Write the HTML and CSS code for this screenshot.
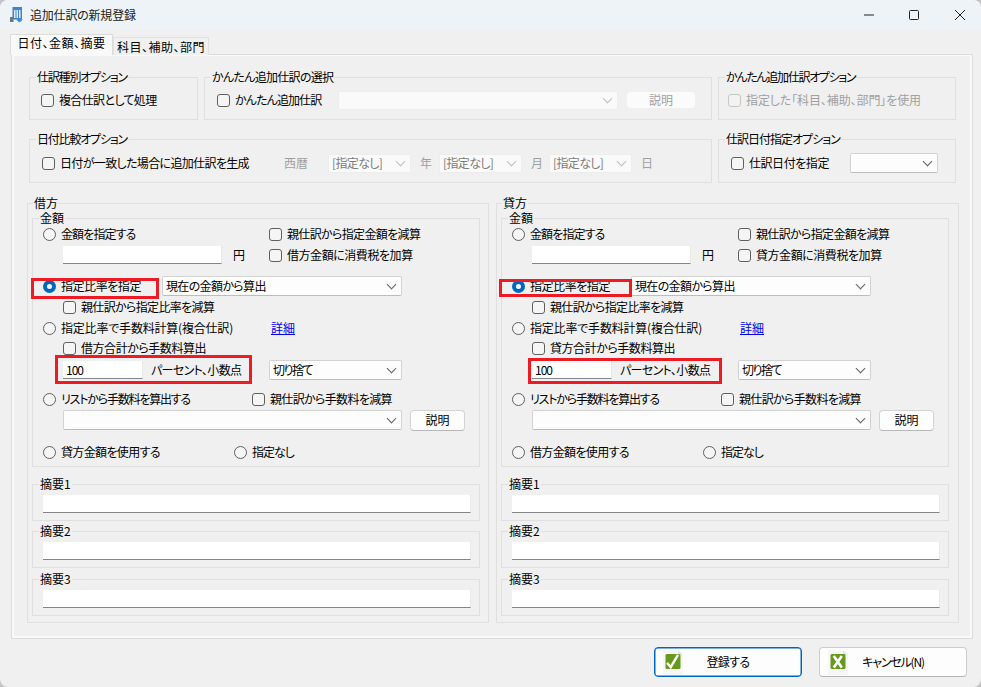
FILE: index.html
```html
<!DOCTYPE html>
<html lang="ja">
<head>
<meta charset="utf-8">
<title>追加仕訳の新規登録</title>
<link rel="stylesheet" href="styles.css">
</head>
<body>
<div class="window">
  <header class="titlebar">
    <svg class="app-icon" width="14" height="16" viewBox="0 0 14 16"><rect x="3.5" y="0" width="9.5" height="12.5" fill="#3f83cf"/><rect x="5" y="3" width="6.5" height="8" fill="#e3edf8"/><path d="M7 3v8M9.5 3v8" stroke="#3f83cf" stroke-width="1"/><rect x="1" y="10" width="3.5" height="5" fill="#6d7682"/><path d="M8.5 11h4v1.500h1.500L10.500 15.500 7 12.500h1.500z" fill="#3a8be0"/></svg>
    <span class="title-text">追加仕訳の新規登録</span>
    <div class="win-controls">
      <svg width="10" height="10" viewBox="0 0 10 10"><path d="M0 5h10" stroke="#222" stroke-width="1"/></svg>
      <svg width="10" height="10" viewBox="0 0 10 10"><rect x="0.5" y="0.500" width="9" height="9" rx="1" fill="none" stroke="#222"/></svg>
      <svg width="10" height="10" viewBox="0 0 10 10"><path d="M0 0l10 10M10 0L0 10" stroke="#222" stroke-width="1"/></svg>
    </div>
  </header>

  <nav class="tabs">
    <div class="tab active">日付、金額、摘要</div>
    <div class="tab">科目、補助、部門</div>
  </nav>

  <main class="panel">
    <div class="group-row first">
      <section class="group g1">
        <div class="legend sp-12">仕訳種別オプション</div>
        <div class="row top-row pad-11">
          <label class="opt"><input type="checkbox">複合仕訳として処理</label>
        </div>
      </section>
      <section class="group g2">
        <div class="legend sp-7">かんたん追加仕訳の選択</div>
        <div class="row top-row pad-12">
          <label class="opt w-121 sp-9"><input type="checkbox">かんたん追加仕訳</label>
          <div class="combo off w-280 h-19"></div>
          <button class="btn off-btn" type="button">説明</button>
        </div>
      </section>
      <section class="group g3">
        <div class="legend sp-13">かんたん追加仕訳オプション</div>
        <div class="row top-row pad-9">
          <label class="opt off-text sp-1"><input type="checkbox" disabled>指定した「科目、補助、部門」を使用</label>
        </div>
      </section>
    </div>

    <div class="group-row second">
      <section class="group g4">
        <div class="legend sp-12">日付比較オプション</div>
        <div class="row second-row pad-12">
          <label class="opt w-242"><input type="checkbox">日付が一致した場合に追加仕訳を生成</label>
          <span class="off-text w-44 sp-0">西暦</span>
          <div class="combo off w-83 h-19"><span>[指定なし]</span></div>
          <span class="off-text unit w-19">年</span>
          <div class="combo off w-83 h-19"><span>[指定なし]</span></div>
          <span class="off-text unit w-18">月</span>
          <div class="combo off w-83 h-19"><span>[指定なし]</span></div>
          <span class="off-text unit">日</span>
        </div>
      </section>
      <section class="group g5">
        <div class="legend sp-10">仕訳日付指定オプション</div>
        <div class="row second-row pad-12">
          <label class="opt w-119 sp-4"><input type="checkbox">仕訳日付を指定</label>
          <div class="combo w-88 h-20"></div>
        </div>
      </section>
    </div>

    <div class="sides">
      <section class="group side side-l">
        <div class="legend side-legend">借方</div>
        <div class="group money">
          <div class="legend">金額</div>
          <div class="row r1"><label class="opt w-226 sp-9"><input type="radio" name="l">金額を指定する</label><label class="opt"><input type="checkbox">親仕訳から指定金額を減算</label></div>
          <div class="row r2 indent"><input class="field w-159" type="text"><span class="yen">円</span><label class="opt sp-4"><input type="checkbox">借方金額に消費税を加算</label></div>
          <div class="row r3"><label class="opt w-119 sp-4"><input type="radio" name="l" checked>指定比率を指定</label><div class="combo w-240 h-20"><span>現在の金額から算出</span></div></div>
          <div class="row r4 indent"><label class="opt"><input type="checkbox">親仕訳から指定比率を減算</label></div>
          <div class="row r5"><label class="opt w-228 sp-2"><input type="radio" name="l">指定比率で手数料計算(複合仕訳)</label><a class="link" href="#">詳細</a></div>
          <div class="row r6 indent"><label class="opt sp-4"><input type="checkbox">借方合計から手数料算出</label></div>
          <div class="row r7 indent"><input class="field w-80 num" type="text" value="100"><span class="pct">パーセント、小数点</span><div class="combo w-133 h-20"><span class="sp-15">切り捨て</span></div></div>
          <div class="row r8"><label class="opt w-209 sp-12"><input type="radio" name="l">リストから手数料を算出する</label><label class="opt"><input type="checkbox">親仕訳から手数料を減算</label></div>
          <div class="row r9 indent"><div class="combo w-339 h-20"></div><button class="btn" type="button">説明</button></div>
          <div class="row r10"><label class="opt w-191"><input type="radio" name="l">貸方金額を使用する</label><label class="opt sp-10"><input type="radio" name="l">指定なし</label></div>
        </div>
        <div class="group memo m1"><div class="legend">摘要1</div><input class="field memo-field" type="text"></div>
        <div class="group memo m2"><div class="legend">摘要2</div><input class="field memo-field" type="text"></div>
        <div class="group memo m3"><div class="legend">摘要3</div><input class="field memo-field" type="text"></div>
        <span class="mark l-a"></span>
        <span class="mark l-b"></span>
      </section>

      <section class="group side side-r">
        <div class="legend side-legend">貸方</div>
        <div class="group money">
          <div class="legend">金額</div>
          <div class="row r1"><label class="opt w-226 sp-9"><input type="radio" name="r">金額を指定する</label><label class="opt"><input type="checkbox">親仕訳から指定金額を減算</label></div>
          <div class="row r2 indent"><input class="field w-159" type="text"><span class="yen">円</span><label class="opt sp-4"><input type="checkbox">貸方金額に消費税を加算</label></div>
          <div class="row r3"><label class="opt w-119 sp-4"><input type="radio" name="r" checked>指定比率を指定</label><div class="combo w-240 h-20"><span>現在の金額から算出</span></div></div>
          <div class="row r4 indent"><label class="opt"><input type="checkbox">親仕訳から指定比率を減算</label></div>
          <div class="row r5"><label class="opt w-228 sp-2"><input type="radio" name="r">指定比率で手数料計算(複合仕訳)</label><a class="link" href="#">詳細</a></div>
          <div class="row r6 indent"><label class="opt sp-4"><input type="checkbox">貸方合計から手数料算出</label></div>
          <div class="row r7 indent"><input class="field w-80 num" type="text" value="100"><span class="pct">パーセント、小数点</span><div class="combo w-133 h-20"><span class="sp-15">切り捨て</span></div></div>
          <div class="row r8"><label class="opt w-209 sp-12"><input type="radio" name="r">リストから手数料を算出する</label><label class="opt"><input type="checkbox">親仕訳から手数料を減算</label></div>
          <div class="row r9 indent"><div class="combo w-339 h-20"></div><button class="btn" type="button">説明</button></div>
          <div class="row r10"><label class="opt w-191"><input type="radio" name="r">借方金額を使用する</label><label class="opt sp-10"><input type="radio" name="r">指定なし</label></div>
        </div>
        <div class="group memo m1"><div class="legend">摘要1</div><input class="field memo-field" type="text"></div>
        <div class="group memo m2"><div class="legend">摘要2</div><input class="field memo-field" type="text"></div>
        <div class="group memo m3"><div class="legend">摘要3</div><input class="field memo-field" type="text"></div>
        <span class="mark r-a"></span>
        <span class="mark r-b"></span>
      </section>
    </div>
  </main>

  <footer class="footer">
    <button class="action primary" type="button">
      <svg width="24" height="27" viewBox="0 0 24 27"><path d="M1 1h15l5 5v20H1z" fill="#f6f6f6"/><path d="M16 1l5 5h-5z" fill="#e4e4e4"/><rect x="3.500" y="5" width="15" height="15" rx="1.500" fill="#669a1c"/><path d="M5 13.800l3.700 4.400 7.300-12.400" fill="none" stroke="#fff" stroke-width="2.400"/></svg>
      <span>登録する</span>
    </button>
    <button class="action" type="button">
      <svg width="24" height="27" viewBox="0 0 24 27"><path d="M1 1h15l5 5v20H1z" fill="#f6f6f6"/><path d="M16 1l5 5h-5z" fill="#e4e4e4"/><rect x="3.500" y="5" width="15" height="15" rx="1.500" fill="#669a1c"/><path d="M6.800 7l8 11.500M14.800 7l-8 11.500" fill="none" stroke="#fff" stroke-width="2.600"/></svg>
      <span class="sp-12">キャンセル(N)</span>
    </button>
  </footer>
</div>
</body>
</html>
```
FILE: styles.css
```css
* { box-sizing: border-box; }
html, body { margin: 0; padding: 0; background: #c4c4c4; }
body { width: 981px; height: 687px; overflow: hidden; }

.window {
  width: 981px;
  height: 687px;
  background: #f0f0f0;
  border-radius: 8px;
  overflow: hidden;
  color: #000;
  font: 12px/16px "Noto Sans CJK JP", "Noto Sans", sans-serif;
  font-feature-settings: "palt";
  letter-spacing: -0.65px;
}

.sp-0 { letter-spacing: 0; }
.sp-1 { letter-spacing: -0.1px; }
.sp-2 { letter-spacing: -0.2px; }
.sp-4 { letter-spacing: -0.45px; }
.sp-7 { letter-spacing: -0.7px; }
.sp-9 { letter-spacing: -0.9px; }
.sp-10 { letter-spacing: -1px; }
.sp-12 { letter-spacing: -1.2px; }
.sp-13 { letter-spacing: -1.3px; }
.sp-15 { letter-spacing: -1.5px; }

.titlebar {
  display: flex;
  align-items: center;
  height: 30px;
  padding-left: 9px;
  background: #edf3f7;
}
.app-icon { margin-right: 7px; }
.title-text { color: #222; letter-spacing: -0.2px; }
.win-controls { display: flex; gap: 36px; margin-left: auto; margin-right: 16px; }
.win-controls svg:first-child { margin-right: -1px; }

.tabs { display: flex; align-items: flex-end; height: 25px; padding: 0 0 0 10px; margin-bottom: -1px; position: relative; letter-spacing: 0.5px; }
.tab {
  width: 96px;
  height: 18px;
  line-height: 18px;
  text-align: center;
  background: #f0f0f0;
  border: 1px solid #e2e2e2;
  border-bottom: 0;
}
.tab.active { width: 103px; height: 21px; line-height: 16px; background: #f9f9f9; border-color: #dcdcdc; }

.panel {
  width: 962px;
  height: 585px;
  margin-left: 11px;
  border: 1px solid #dcdcdc;
  box-shadow: inset 2px 1px 0 #f9f9f9, inset -2px -2px 0 #f9f9f9;
}

.group { border: 1px solid #dfdfdf; }
.legend {
  width: fit-content;
  height: 16px;
  margin: -9px 0 0 6px;
  padding: 0 1px;
  background: #f0f0f0;
  white-space: nowrap;
}
.legend:not([class*="sp-"]) { letter-spacing: 0; }
.side-legend { margin-left: 5px; }
.money > .legend { margin-left: -4px; }

.group-row { display: flex; gap: 6px; margin-left: 17px; }
.group-row.first { margin-top: 22px; }
.group-row.second { margin-top: 19px; }
.g1 { width: 169px; height: 43px; }
.g2 { width: 508px; height: 43px; }
.g3 { width: 238px; height: 43px; }
.g4 { width: 683px; height: 44px; }
.g5 { width: 238px; height: 44px; }

.row { display: flex; align-items: center; height: 20px; white-space: nowrap; }
.top-row { margin-top: 5px; }
.second-row { margin-top: 6px; }
.pad-9 { padding-left: 9px; }
.pad-11 { padding-left: 11px; }
.pad-12 { padding-left: 12px; }

.opt { display: inline-flex; align-items: center; gap: 5px; flex: none; }
input[type="checkbox"], input[type="radio"] {
  appearance: none;
  width: 13px;
  height: 13px;
  margin: 0;
  flex: none;
  background: #f5f5f5;
  border: 1px solid #5f5f5f;
}
input[type="checkbox"] { border-radius: 3px; }
input[type="radio"] { border-radius: 50%; }
input[type="radio"]:checked { background: #fff; border: 4px solid #0067c0; }
input[type="checkbox"]:disabled { border-color: #c6c6c6; background: #f2f2f2; }

.off-text { color: #a0a0a0; flex: none; }
.unit { margin-left: 9px; }

.w-18 { width: 18px; }
.w-19 { width: 19px; }
.w-44 { width: 44px; }
.w-80 { width: 80px; }
.w-83 { width: 83px; }
.w-88 { width: 88px; }
.w-119 { width: 119px; }
.w-121 { width: 121px; }
.w-133 { width: 133px; }
.w-159 { width: 159px; }
.w-191 { width: 191px; }
.w-209 { width: 209px; }
.w-226 { width: 226px; }
.w-228 { width: 228px; }
.w-240 { width: 240px; }
.w-242 { width: 242px; }
.w-280 { width: 280px; }
.w-339 { width: 339px; }
.h-19 { height: 19px; }
.h-20 { height: 20px; }

.combo {
  display: flex;
  align-items: center;
  flex: none;
  padding-left: 3px;
  background: #fdfdfd;
  border: 1px solid #d2d2d2;
  border-bottom-color: #bdbdbd;
  border-radius: 2px;
}
.combo::after {
  content: "";
  width: 6px;
  height: 6px;
  margin: -4px 6px 0 auto;
  border-right: 1px solid #606060;
  border-bottom: 1px solid #606060;
  transform: rotate(45deg);
}
.combo.off { background: #fafafa; border-color: #ededed; color: #7c7c7c; border-radius: 1px; }
.combo.off::after { border-color: #bdbdbd; }

.btn {
  flex: none;
  width: 55px;
  height: 21px;
  margin-left: 8px;
  padding: 0;
  font: inherit;
  font-feature-settings: inherit;
  letter-spacing: 0;
  color: #000;
  background: #fdfdfd;
  border: 1px solid #d3d3d3;
  border-bottom-color: #b8b8b8;
  border-radius: 4px;
}
.off-btn { width: 70px; height: 18px; line-height: 16px; color: #a0a0a0; background: #fbfbfb; border-color: #f0f0f0; }

.field {
  display: block;
  flex: none;
  height: 18px;
  padding: 0 3px;
  font: inherit;
  font-feature-settings: inherit;
  color: #000;
  background: #fff;
  border: 0;
  border-right: 1px solid #e8e8e8;
  border-bottom: 1px solid #858585;
  border-radius: 0;
  outline: none;
}
.num { letter-spacing: -1px; }

.sides { display: flex; gap: 7px; margin-top: 20px; margin-left: 15px; }
.side { position: relative; height: 420px; }
.side-l { width: 462px; }
.side-r { width: 463px; }

.money { width: 448px; height: 249px; margin: 7px 0 0 4px; padding-left: 10px; }
.indent { padding-left: 20px; }
.r1 { margin-top: -2px; }
.r2 { margin-top: 1px; }
.r3 { margin-top: 11px; }
.r4 { margin-top: 1px; }
.r5 { margin-top: 1px; }
.r6 { margin-top: 0; }
.r7 { margin-top: 2px; }
.r8 { margin-top: 9px; }
.r9 { margin-top: 1px; }
.r10 { margin-top: 12px; }
.yen { width: 36px; margin-left: 11px; flex: none; }
.pct { width: 118px; margin-left: 8px; flex: none; }
.link { color: #0000ee; text-decoration: underline; letter-spacing: 0; }

.memo { width: 448px; height: 37px; margin-left: 4px; }
.m1 { margin-top: 17px; }
.m2 { margin-top: 10px; }
.m3 { margin-top: 11px; }
.memo-field { width: 428px; margin: 3px 0 0 10px; }

.mark { position: absolute; border: 3px solid #ed1c24; pointer-events: none; }
.l-a { left: 3px; top: 74px; width: 128px; height: 21px; }
.l-b { left: 27px; top: 151px; width: 197px; height: 29px; }
.r-a { left: 2px; top: 75px; width: 133px; height: 18px; }
.r-b { left: 31px; top: 154px; width: 194px; height: 26px; }

.footer { display: flex; justify-content: flex-end; gap: 17px; margin-top: 8px; padding-right: 14px; }
.action {
  display: grid;
  grid-template-columns: 1fr auto 1fr;
  align-items: center;
  width: 148px;
  height: 30px;
  padding: 0 7px;
  font: inherit;
  font-feature-settings: inherit;
  letter-spacing: -0.65px;
  color: #000;
  background: #fdfdfd;
  border: 1px solid #cdcdcd;
  border-bottom-color: #b4b4b4;
  border-radius: 4px;
}
.action svg { justify-self: start; }
.action.primary { border: 1px solid #0067c0; box-shadow: inset 0 0 0 0.5px #0067c0; }
```
